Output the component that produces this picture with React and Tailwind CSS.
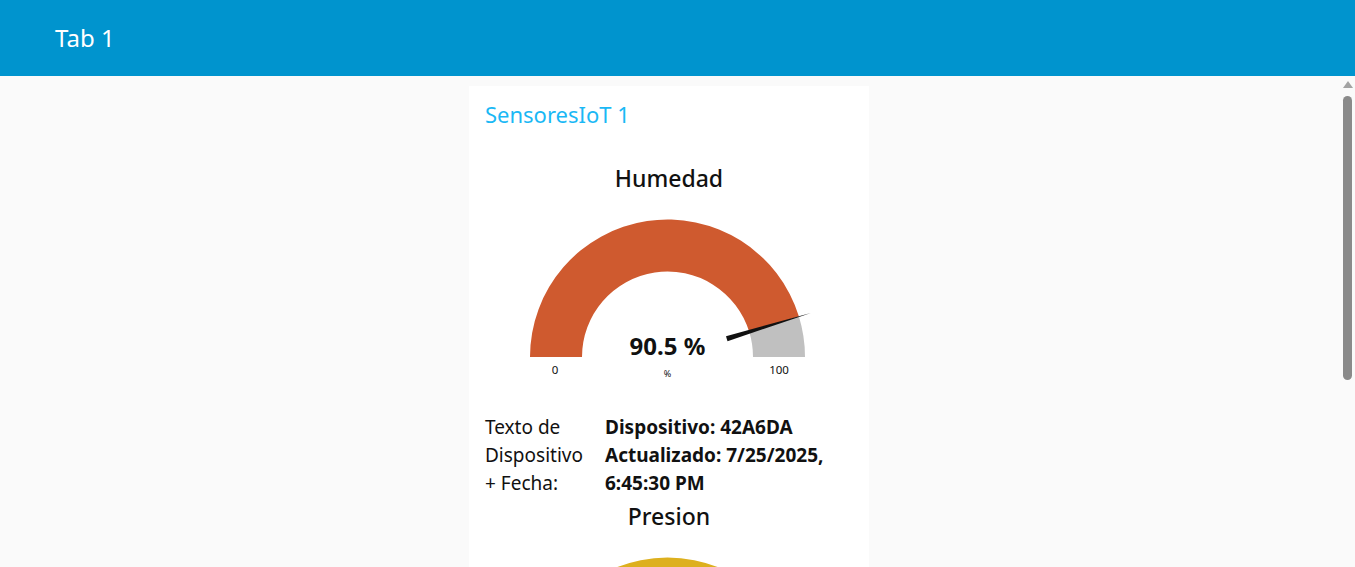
import React from "react";

const font = { fontFamily: "'Noto Sans', 'Open Sans', sans-serif" };

function Gauge({ color, value, showNeedle = true }) {
  // geometry of the half-ring gauge
  const cx = 182.5;
  const cy = 152;
  const R = 137.5;
  const r = 85.5;
  const t = Math.PI * (1 - value / 100);
  const ox = cx + R * Math.cos(t);
  const oy = cy - R * Math.sin(t);
  const ix = cx + r * Math.cos(t);
  const iy = cy - r * Math.sin(t);
  const ux = Math.cos(t);
  const uy = -Math.sin(t);
  const b1 = [cx + 62 * ux - 2.6 * uy, cy + 62 * uy + 2.6 * ux];
  const b2 = [cx + 62 * ux + 2.6 * uy, cy + 62 * uy - 2.6 * ux];
  const tip = [cx + 150 * ux, cy + 150 * uy];

  return (
    <svg width="368" height="180" viewBox="0 0 368 180" className="block">
      <path
        d={`M ${cx - R} ${cy} A ${R} ${R} 0 0 1 ${ox} ${oy} L ${ix} ${iy} A ${r} ${r} 0 0 0 ${cx - r} ${cy} Z`}
        fill={color}
      />
      <path
        d={`M ${ox} ${oy} A ${R} ${R} 0 0 1 ${cx + R} ${cy} L ${cx + r} ${cy} A ${r} ${r} 0 0 0 ${ix} ${iy} Z`}
        fill="#c0c0c0"
      />
      {showNeedle && (
        <>
          <polygon points={`${b1.join(",")} ${b2.join(",")} ${tip.join(",")}`} fill="#111" />
          <text x={cx} y="150" textAnchor="middle" fontSize="24" fontWeight="700" fill="#111" style={font}>
            90.5 %
          </text>
          <text x="70" y="169" textAnchor="middle" fontSize="11.5" fill="#111" style={font}>0</text>
          <text x={cx} y="172" textAnchor="middle" fontSize="9" fill="#111" style={font}>%</text>
          <text x="294" y="169" textAnchor="middle" fontSize="11.5" fill="#111" style={font}>100</text>
        </>
      )}
    </svg>
  );
}

export default function App() {
  return (
    <div className="h-[567px] flex flex-col overflow-hidden bg-[#fafafa]" style={font}>
      <header className="h-[76px] shrink-0 bg-[#0094ce] flex items-center pl-[55px] text-white text-[24px]">
        Tab 1
      </header>

      <div className="flex flex-1 min-h-0">
        <main className="flex-1 flex justify-center pt-[10px] pr-[2px] overflow-hidden">
          <div className="w-[400px] bg-white px-4 pt-[12px] text-[#111]">
            <div className="text-[22px] leading-[32px] text-[#1ab8f5]">SensoresIoT 1</div>

            <div className="mt-8 text-center text-[23px] leading-[32px] font-medium">Humedad</div>
            <div className="mt-[11px]">
              <Gauge color="#cf5a2f" value={90.5} />
            </div>

            <div className="mt-[28px] flex text-[19px] leading-[28px]">
              <div className="w-[120px] shrink-0">
                Texto de
                <br />
                Dispositivo
                <br />+ Fecha:
              </div>
              <div className="font-bold">
                Dispositivo: 42A6DA
                <br />
                Actualizado: 7/25/2025, 6:45:30 PM
              </div>
            </div>

            <div className="mt-[3px] text-center text-[23px] leading-[32px] font-medium">Presion</div>
            <div className="mt-[11px]">
              <Gauge color="#ddb01e" value={100} showNeedle={false} />
            </div>
          </div>
        </main>

        <div className="w-[15px] shrink-0 flex flex-col items-center pt-[5px]">
          <div className="w-0 h-0 border-l-[5px] border-r-[5px] border-b-[7px] border-l-transparent border-r-transparent border-b-[#a3a3a3]" />
          <div className="mt-[8px] w-[9px] h-[284px] rounded-full bg-[#8a8a8a]" />
        </div>
      </div>
    </div>
  );
}
